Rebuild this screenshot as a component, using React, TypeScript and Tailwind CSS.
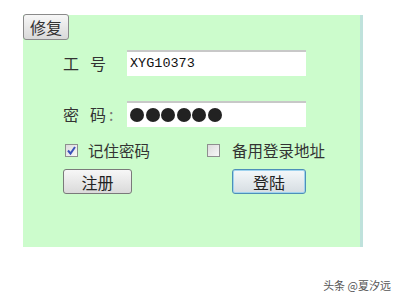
import React from "react";

const cjk = { fontFamily: '"Noto Sans CJK SC", "Noto Sans", sans-serif' };

function Check({ checked }: { checked: boolean }) {
  return (
    <div className="w-[13px] h-[13px] border border-[#8e8f8f] bg-gradient-to-br from-[#dcdcdc] to-[#f8f8f8] flex items-center justify-center">
      {checked && (
        <svg width="11" height="11" viewBox="0 0 11 11">
          <path d="M2 5.5 L4.5 8.5 L9 2" stroke="#3a52b8" strokeWidth="2" fill="none" />
        </svg>
      )}
    </div>
  );
}

export default function App() {
  return (
    <div className="w-[400px] h-[300px] bg-white overflow-hidden text-[#222]" style={cjk}>
      <div className="ml-[23px] mt-[15px] w-[340px] h-[232px] bg-[#ccfccc] border-r-[3px] border-[#bfe2dc] flex flex-col">
        <button className="w-[46px] h-[26px] -mt-[1px] rounded-[3px] border border-[#8a8a8a] bg-gradient-to-b from-[#f7f7f7] to-[#d9d9d9] text-[16px] leading-none text-[#333] flex items-center justify-center">
          修复
        </button>
        <div className="flex items-center mt-[10px] h-[26px]">
          <div className="ml-[40px] w-[64px] flex items-center text-[16px] text-[#333]">
            <span className="w-[27px]">工</span>
            <span>号</span>
          </div>
          <div className="w-[179px] h-[26px] bg-white border-t-2 border-[#c8c8c8] pl-[3px] flex items-center text-[13.5px] text-[#111]" style={{ fontFamily: '"Liberation Mono", monospace' }}>
            XYG10373
          </div>
        </div>
        <div className="flex items-center mt-[25px] h-[26px]">
          <div className="ml-[40px] w-[64px] flex items-center text-[16px] text-[#333]">
            <span className="w-[27px]">密</span>
            <span>码</span>
            <span className="ml-[3px] text-[#777]">:</span>
          </div>
          <div className="w-[179px] h-[26px] bg-white border-t-2 border-[#c8c8c8] pl-[3px] flex items-center gap-[1.5px]">
            {[0, 1, 2, 3, 4, 5].map((i) => (
              <span key={i} className="w-[14px] h-[14px] rounded-full bg-[#222]" />
            ))}
          </div>
        </div>
        <div className="flex items-center mt-[15px] h-[17px] text-[15.5px] text-[#333]">
          <div className="ml-[42px]">
            <Check checked />
          </div>
          <span className="ml-[10px] leading-none w-[62px]">记住密码</span>
          <div className="ml-[57px]">
            <Check checked={false} />
          </div>
          <span className="ml-[12px] leading-none">备用登录地址</span>
        </div>
        <div className="flex items-center mt-[10px]">
          <button className="ml-[40px] w-[69px] h-[25px] rounded-[3px] border border-[#7a7a7a] bg-gradient-to-b from-[#f7f7f7] to-[#dadada] text-[16px] leading-none text-[#222] flex items-center justify-center">
            注册
          </button>
          <button className="ml-[100px] w-[74px] h-[25px] rounded-[3px] border border-[#4e8fb8] shadow-[inset_0_0_0_1px_#9fd3ee] bg-gradient-to-b from-[#f4f8fa] to-[#d6dde2] text-[16px] leading-none text-[#222] flex items-center justify-center">
            登陆
          </button>
        </div>
      </div>
      <div className="flex justify-end pr-[9px] mt-[31px] text-[11px] leading-[14px] text-[#555]">
        头条 @夏汐远
      </div>
    </div>
  );
}
